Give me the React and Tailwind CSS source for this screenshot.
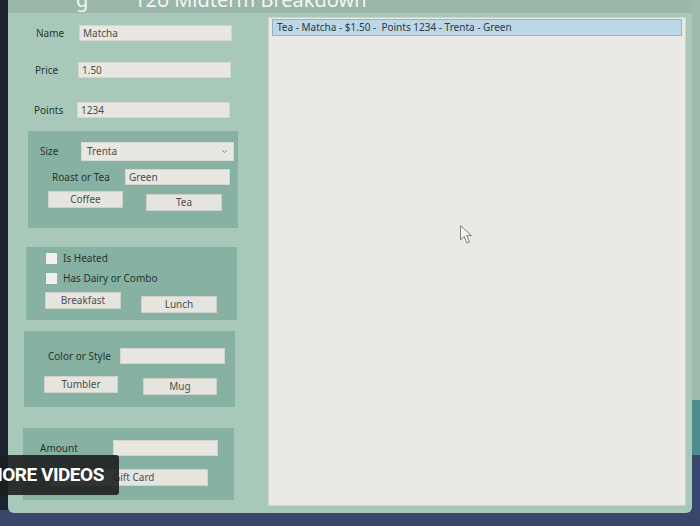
import React from "react";

const font = { fontFamily: '"Noto Sans", "Open Sans", sans-serif' };

function TextBox({ value = "", className = "" }) {
  return (
    <div className={`h-[16px] bg-[#e9e7e1] border border-[#d6d6cf] text-[10px] leading-[14px] pl-[3px] text-[#4a4f4c] ${className}`}>
      {value}
    </div>
  );
}

function Btn({ label, className = "" }) {
  return (
    <div className={`h-[17px] bg-[#e6e4de] border border-[#cfd2cb] text-[10px] leading-[15px] text-center text-[#4b504d] ${className}`}>
      {label}
    </div>
  );
}

function Check({ label, className = "" }) {
  return (
    <div className={`flex items-center gap-[6px] ${className}`}>
      <div className="w-[11px] h-[11px] bg-[#f1f0ec]" />
      <span className="text-[10px] leading-[14px] text-[#27352f]">{label}</span>
    </div>
  );
}

export default function App() {
  return (
    <div style={font} className="relative w-[700px] h-[526px] bg-[#3b466c] overflow-hidden">
      <div className="absolute left-0 top-0 w-[10px] h-[510px] bg-[#1c2330]" />
      <div className="absolute right-0 top-0 w-[10px] h-[400px] bg-[#9fbbb0]" />
      <div className="absolute right-0 top-[400px] w-[10px] h-[55px] bg-[#4d8c8c]" />
      <div className="relative ml-[8px] w-[684px] h-[513px] bg-[#a8c9b9] rounded-b-[6px] flex flex-col">
        {/* title strip */}
        <div className="h-[13px] bg-[#9bb7aa] overflow-hidden relative">
          <div className="absolute left-[68px] top-[-10px] text-[20px] leading-[20px] text-[#f3f6f4] whitespace-nowrap">
            g
          </div>
          <div className="absolute left-[126px] top-[-10px] text-[20px] leading-[20px] text-[#f3f6f4] whitespace-nowrap">
            12o Midterm Breakdown
          </div>
        </div>
        <div className="flex flex-1">
          {/* left column */}
          <div className="w-[252px] flex flex-col">
            <div className="flex items-center mt-[12px]">
              <span className="ml-[28px] w-[43px] text-[10px] text-[#27352f]">Name</span>
              <TextBox value="Matcha" className="w-[153px]" />
            </div>
            <div className="flex items-center mt-[21px]">
              <span className="ml-[27px] w-[43px] text-[10px] text-[#27352f]">Price</span>
              <TextBox value="1.50" className="w-[153px]" />
            </div>
            <div className="flex items-center mt-[24px]">
              <span className="ml-[26px] w-[43px] text-[10px] text-[#27352f]">Points</span>
              <TextBox value="1234" className="w-[153px]" />
            </div>

            {/* group 1 */}
            <div className="ml-[20px] w-[210px] h-[97px] mt-[13px] bg-[#86b1a3] flex flex-col">
              <div className="flex items-center mt-[11px]">
                <span className="ml-[12px] w-[41px] text-[10px] text-[#27352f]">Size</span>
                <div className="w-[153px] h-[19px] bg-[#e9e7e1] border border-[#d8d8d0] flex items-center justify-between pl-[5px] pr-[5px] text-[10px] text-[#4a4f4c]">
                  <span>Trenta</span>
                  <svg width="7" height="5" viewBox="0 0 7 5"><path d="M1 1l2.5 2.5L6 1" fill="none" stroke="#8a8f8b" strokeWidth="1" /></svg>
                </div>
              </div>
              <div className="flex items-center mt-[8px]">
                <span className="ml-[24px] w-[73px] text-[10px] text-[#27352f]">Roast or Tea</span>
                <TextBox value="Green" className="w-[105px]" />
              </div>
              <div className="flex items-start mt-[6px]">
                <Btn label="Coffee" className="ml-[20px] w-[75px]" />
                <Btn label="Tea" className="ml-[23px] w-[76px] mt-[3px]" />
              </div>
            </div>

            {/* group 2 */}
            <div className="ml-[18px] w-[211px] h-[73px] mt-[19px] bg-[#86b1a3] flex flex-col">
              <Check label="Is Heated" className="ml-[20px] mt-[4px]" />
              <Check label="Has Dairy or Combo" className="ml-[20px] mt-[6px]" />
              <div className="flex items-start mt-[7px]">
                <Btn label="Breakfast" className="ml-[19px] w-[76px]" />
                <Btn label="Lunch" className="ml-[20px] w-[76px] mt-[4px]" />
              </div>
            </div>

            {/* group 3 */}
            <div className="ml-[16px] w-[211px] h-[76px] mt-[11px] bg-[#86b1a3] flex flex-col">
              <div className="flex items-center mt-[17px]">
                <span className="ml-[24px] w-[72px] text-[10px] text-[#27352f]">Color or Style</span>
                <TextBox value="" className="w-[105px]" />
              </div>
              <div className="flex items-start mt-[12px]">
                <Btn label="Tumbler" className="ml-[20px] w-[74px]" />
                <Btn label="Mug" className="ml-[25px] w-[74px] mt-[2px]" />
              </div>
            </div>

            {/* group 4 */}
            <div className="ml-[15px] w-[211px] h-[72px] mt-[21px] bg-[#86b1a3] flex flex-col">
              <div className="flex items-center mt-[12px]">
                <span className="ml-[17px] w-[73px] text-[10px] text-[#27352f]">Amount</span>
                <TextBox value="" className="w-[105px]" />
              </div>
              <div className="flex items-start mt-[13px]">
                <Btn label="Gift Card" className="ml-[27px] w-[158px] text-left pl-[62px]" />
              </div>
            </div>
          </div>

          {/* right list */}
          <div className="ml-[8px] mt-[4px] w-[418px] h-[489px] bg-[#ebe9e5] border border-[#c9d3cf] flex flex-col">
            <div className="mx-[3px] mt-[1px] h-[17px] bg-[#bcd7e6] border border-[#8eb6d0] text-[10px] leading-[15px] pl-[4px] text-[#2e3a44] whitespace-nowrap">
              Tea - Matcha - $1.50 -&nbsp; Points 1234 - Trenta - Green
            </div>
          </div>
        </div>
      </div>

      {/* cursor */}
      <svg className="absolute left-[459px] top-[224px]" width="18" height="22" viewBox="0 0 18 22">
        <path d="M1.5 1.5 L1.5 16 L5 12.5 L8 19 L10.5 18 L7.7 11.6 L12.5 11.6 Z" fill="#f4f3f0" stroke="#7d807d" strokeWidth="1" strokeLinejoin="round" />
      </svg>

      {/* video overlay */}
      <div className="absolute left-0 top-[455px] w-[119px] h-[40px] bg-[#1d1f20]/90 rounded-r-[3px] overflow-hidden flex items-center">
        <span className="ml-[-14px] text-[19px] font-bold text-white whitespace-nowrap tracking-tight" style={{ fontFamily: '"Roboto", "Noto Sans", sans-serif' }}>
          MORE VIDEOS
        </span>
      </div>
    </div>
  );
}
